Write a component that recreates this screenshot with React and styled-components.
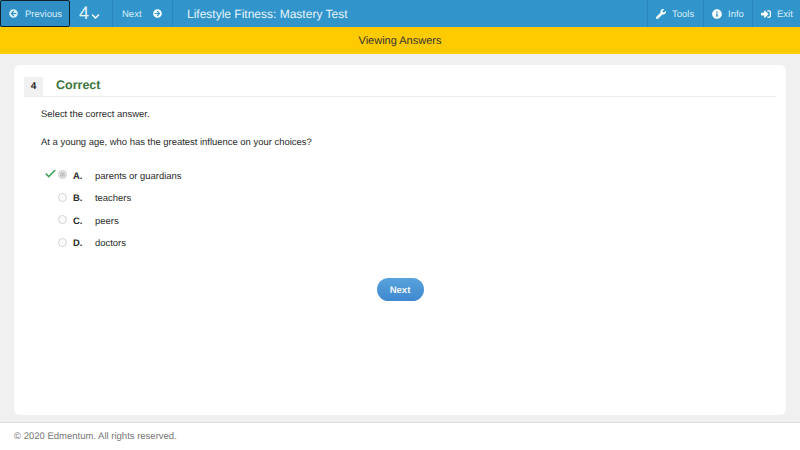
import React from "react"
import styled, { createGlobalStyle } from "styled-components"
import {
  FaArrowCircleLeft,
  FaArrowCircleRight,
  FaChevronDown,
  FaInfoCircle,
  FaSignInAlt,
  FaWrench,
} from "react-icons/fa"

const answers = [
  { letter: "A.", text: "parents or guardians", picked: true },
  { letter: "B.", text: "teachers" },
  { letter: "C.", text: "peers" },
  { letter: "D.", text: "doctors" },
]

export default function App() {
  return (
    <Page>
      <GlobalStyle />
      <Toolbar>
        <PrevButton>
          <FaArrowCircleLeft size={9} />
          <span>Previous</span>
        </PrevButton>
        <NumberButton>
          4
          <FaChevronDown size={9} />
        </NumberButton>
        <NextNav>
          <span>Next</span>
          <FaArrowCircleRight size={9} />
        </NextNav>
        <Title>Lifestyle Fitness: Mastery Test</Title>
        <ToolGroup>
          <ToolButton $width={56}>
            <FaWrench size={10} />
            <span>Tools</span>
          </ToolButton>
          <ToolButton $width={49}>
            <FaInfoCircle size={10} />
            <span>Info</span>
          </ToolButton>
          <ToolButton $width={48}>
            <FaSignInAlt size={10} />
            <span>Exit</span>
          </ToolButton>
        </ToolGroup>
      </Toolbar>
      <Banner>Viewing Answers</Banner>
      <Content>
        <Card>
          <CardHeader>
            <QuestionNumber>4</QuestionNumber>
            <Status>Correct</Status>
          </CardHeader>
          <Prompt>Select the correct answer.</Prompt>
          <Question>At a young age, who has the greatest influence on your choices?</Question>
          <AnswerList>
            {answers.map(a => (
              <Answer key={a.letter}>
                <CheckSlot>
                  {a.picked ? (
                    <svg width="11" height="9" viewBox="0 0 11 9">
                      <path d="M0.8 4.6 L3.8 7.6 L10.2 1" fill="none" stroke="currentColor" strokeWidth="1.6" />
                    </svg>
                  ) : null}
                </CheckSlot>
                <Radio $picked={a.picked} />
                <Letter>{a.letter}</Letter>
                <span>{a.text}</span>
              </Answer>
            ))}
          </AnswerList>
          <NextRow>
            <NextButton>Next</NextButton>
          </NextRow>
        </Card>
      </Content>
      <Footer>© 2020 Edmentum. All rights reserved.</Footer>
    </Page>
  )
}

// --- styled components ---

const GlobalStyle = createGlobalStyle`
  html, body {
    margin: 0;
    padding: 0;
    background: #fff;
    text-rendering: geometricPrecision;
  }
  * {
    box-sizing: border-box;
  }
`

const Page = styled.div`
  width: 800px;
  height: 450px;
  display: flex;
  flex-direction: column;
  overflow: hidden;
  font-family: "Liberation Sans", Arial, sans-serif;
  color: #2a2a2a;
`

const Toolbar = styled.div`
  height: 27px;
  flex: none;
  display: flex;
  align-items: stretch;
  background: #3195cb;
  color: #d9edf8;
  font-size: 9.5px;
  span {
    margin-top: 1px;
  }
`

const NavItem = styled.div`
  display: flex;
  align-items: center;
  border-right: 1px solid #2b86b9;
`

const PrevButton = styled(NavItem)`
  width: 70px;
  padding-left: 8px;
  gap: 7px;
  background: #2f8fc4;
  border: 1px solid #10212e;
  border-radius: 2px;
`

const NumberButton = styled(NavItem)`
  width: 43px;
  padding-left: 9px;
  gap: 2px;
  font-size: 18px;
  color: #e6f3fa;
  svg {
    margin-top: 5px;
    color: #fff;
  }
`

const NextNav = styled(NavItem)`
  width: 60px;
  padding-left: 9px;
  gap: 11px;
  svg {
    color: #fff;
  }
`

const Title = styled.div`
  flex: 1;
  display: flex;
  align-items: center;
  padding-left: 14px;
  font-size: 12px;
  color: #e6f3fa;
`

const ToolGroup = styled.div`
  display: flex;
`

const ToolButton = styled.div`
  width: ${p => p.$width}px;
  display: flex;
  align-items: center;
  gap: 6px;
  padding-left: 8px;
  border-left: 1px solid #2b86b9;
  svg {
    color: #fff;
  }
`

const Banner = styled.div`
  height: 27px;
  flex: none;
  display: flex;
  align-items: center;
  justify-content: center;
  padding-top: 1px;
  background: #fecb00;
  font-size: 11px;
  color: #333;
`

const Content = styled.div`
  height: 369px;
  flex: none;
  padding: 11px 14px 7px;
  background: #f0f0f0;
  border-bottom: 1px solid #dcdcdc;
`

const Card = styled.div`
  height: 100%;
  padding: 12px 10px;
  background: #fff;
  border-radius: 6px;
`

const CardHeader = styled.div`
  height: 20px;
  display: flex;
  align-items: center;
  border-bottom: 1px solid #eee;
`

const QuestionNumber = styled.div`
  width: 19px;
  height: 19px;
  display: flex;
  align-items: center;
  justify-content: center;
  background: #f1f1f1;
  font-size: 10px;
  font-weight: bold;
`

const Status = styled.div`
  margin: -3px 0 0 13px;
  font-size: 12.5px;
  font-weight: bold;
  color: #3c763d;
`

const Prompt = styled.p`
  margin: 12px 0 0 17px;
  font-size: 9.45px;
  line-height: 12px;
`

const Question = styled.p`
  margin: 16px 0 0 17px;
  font-size: 9.45px;
  line-height: 12px;
`

const AnswerList = styled.div`
  margin: 21px 0 0 21px;
  display: flex;
  flex-direction: column;
  gap: 10px;
`

const Answer = styled.div`
  height: 12.5px;
  display: flex;
  align-items: center;
  font-size: 9.45px;
`

const CheckSlot = styled.div`
  width: 13px;
  height: 12px;
  margin-top: -3px;
  color: #43a35c;
`

const Radio = styled.div`
  width: 9px;
  height: 9px;
  margin-top: -3px;
  border-radius: 50%;
  border: 1px solid #d4d4d4;
  background: ${p => (p.$picked ? "#c4c4c4" : "#fafafa")};
  box-shadow: ${p => (p.$picked ? "inset 0 0 0 1px #eee" : "none")};
`

const Letter = styled.span`
  width: 22px;
  margin-left: 6px;
  font-weight: bold;
`

const NextRow = styled.div`
  margin-top: 28px;
  display: flex;
  justify-content: center;
`

const NextButton = styled.div`
  width: 47px;
  height: 23px;
  display: flex;
  align-items: center;
  justify-content: center;
  padding-top: 1px;
  border-radius: 12px;
  background: linear-gradient(#58a3dc, #3f88cf);
  color: #f2f7fc;
  font-size: 9.5px;
  font-weight: bold;
`

const Footer = styled.div`
  flex: 1;
  padding: 8px 14px 0;
  font-size: 9.5px;
  line-height: 12px;
  color: #777;
`
